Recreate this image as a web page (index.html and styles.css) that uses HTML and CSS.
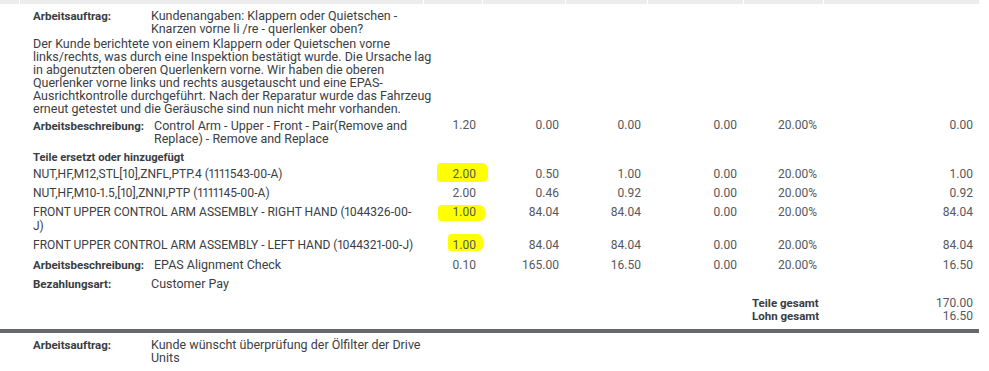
FILE: index.html
```html
<!DOCTYPE html>
<html lang="de">
<head>
<meta charset="utf-8">
<title>Arbeitsauftrag</title>
<link rel="stylesheet" href="styles.css">
</head>
<body>
<div class="page">
  <div class="row thead">
    <div class="th"></div>
    <div class="th"></div>
    <div class="th"></div>
    <div class="th"></div>
    <div class="th"></div>
    <div class="th"></div>
    <div class="th"></div>
    <div class="th"></div>
  </div>

  <section class="job">
    <div class="row">
      <div class="desc">
        <div class="field"><span class="label">Arbeitsauftrag:</span><span class="value">Kundenangaben: Klappern oder Quietschen -<br>Knarzen vorne li /re - querlenker oben?</span></div>
        <p class="note">Der Kunde berichtete von einem Klappern oder Quietschen vorne<br>links/rechts, was durch eine Inspektion bestätigt wurde. Die Ursache lag<br>in abgenutzten oberen Querlenkern vorne. Wir haben die oberen<br>Querlenker vorne links und rechts ausgetauscht und eine EPAS-<br>Ausrichtkontrolle durchgeführt. Nach der Reparatur wurde das Fahrzeug<br>erneut getestet und die Geräusche sind nun nicht mehr vorhanden.</p>
      </div>
    </div>

    <div class="row labor">
      <div class="desc"><div class="field"><span class="label">Arbeitsbeschreibung:</span><span class="value">Control Arm - Upper - Front - Pair(Remove and<br>Replace) - Remove and Replace</span></div></div>
      <div class="num">1.20</div>
      <div class="num">0.00</div>
      <div class="num">0.00</div>
      <div class="num">0.00</div>
      <div class="num">20.00%</div>
      <div class="num">0.00</div>
    </div>

    <div class="row"><div class="desc subhead">Teile ersetzt oder hinzugefügt</div></div>

    <div class="row part">
      <div class="desc part-name">NUT,HF,M12,STL[10],ZNFL,PTP.4 (1111543-00-A)</div>
      <div class="num"><span class="mark mark-a">2.00</span></div>
      <div class="num">0.50</div>
      <div class="num">1.00</div>
      <div class="num">0.00</div>
      <div class="num">20.00%</div>
      <div class="num">1.00</div>
    </div>
    <div class="row part">
      <div class="desc part-name">NUT,HF,M10-1.5,[10],ZNNI,PTP (1111145-00-A)</div>
      <div class="num">2.00</div>
      <div class="num">0.46</div>
      <div class="num">0.92</div>
      <div class="num">0.00</div>
      <div class="num">20.00%</div>
      <div class="num">0.92</div>
    </div>
    <div class="row part">
      <div class="desc part-name">FRONT UPPER CONTROL ARM ASSEMBLY - RIGHT HAND (1044326-00-<br>J)</div>
      <div class="num"><span class="mark mark-b">1.00</span></div>
      <div class="num">84.04</div>
      <div class="num">84.04</div>
      <div class="num">0.00</div>
      <div class="num">20.00%</div>
      <div class="num">84.04</div>
    </div>
    <div class="row part">
      <div class="desc part-name">FRONT UPPER CONTROL ARM ASSEMBLY - LEFT HAND (1044321-00-J)</div>
      <div class="num"><span class="mark mark-c">1.00</span></div>
      <div class="num">84.04</div>
      <div class="num">84.04</div>
      <div class="num">0.00</div>
      <div class="num">20.00%</div>
      <div class="num">84.04</div>
    </div>
    <div class="row part">
      <div class="desc"><div class="field"><span class="label">Arbeitsbeschreibung:</span><span class="value">EPAS Alignment Check</span></div></div>
      <div class="num">0.10</div>
      <div class="num">165.00</div>
      <div class="num">16.50</div>
      <div class="num">0.00</div>
      <div class="num">20.00%</div>
      <div class="num">16.50</div>
    </div>
    <div class="row part">
      <div class="desc"><div class="field"><span class="label">Bezahlungsart:</span><span class="value">Customer Pay</span></div></div>
    </div>

    <div class="totals">
      <div class="row total">
        <div class="tot-label">Teile gesamt</div>
        <div class="num">170.00</div>
      </div>
      <div class="row total">
        <div class="tot-label">Lohn gesamt</div>
        <div class="num">16.50</div>
      </div>
    </div>
  </section>

  <div class="divider"></div>

  <section class="job">
    <div class="row">
      <div class="desc">
        <div class="field"><span class="label">Arbeitsauftrag:</span><span class="value">Kunde wünscht überprüfung der Ölfilter der Drive<br>Units</span></div>
      </div>
    </div>
  </section>
</div>
</body>
</html>
```

FILE: styles.css
```css
* {
  box-sizing: border-box;
}

html,
body {
  margin: 0;
  background: #ffffff;
}

body {
  font-family: Roboto, "Liberation Sans", Arial, sans-serif;
  font-size: 12.5px;
  line-height: 13px;
  color: #3b3e43;
  overflow: hidden;
}

.page {
  width: 979px;
  position: relative;
  z-index: 0;
}

.row {
  display: grid;
  grid-template-columns: 19px 403px 58px 82px 81px 95px 79px 155px;
  column-gap: 1px;
  align-items: start;
}

/* header row, scrolled almost out of view */
.th {
  height: 4px;
  background: #ececec;
}

/* description column */
.desc {
  grid-column: 2;
  padding: 0 11px 0 13px;
}

.field {
  display: flex;
  align-items: baseline;
}

.label {
  flex: none;
  min-width: 118px;
  padding-right: 10px;
  font-weight: 700;
  font-size: 11.5px;
  color: #393c41;
}

.value {
  flex: 1;
  min-width: 0;
  white-space: nowrap;
}

.note {
  margin: 2px 0 0;
  white-space: nowrap;
}

.num {
  text-align: right;
  padding-right: 6px;
  font-size: 12px;
  color: #55585d;
  white-space: nowrap;
}

.job {
  padding-top: 5px;
}

.labor {
  margin-top: 4px;
}

.subhead {
  padding-top: 6px;
  font-weight: 700;
  font-size: 11.2px;
  color: #393c41;
}

.part {
  padding: 2.625px 0;
  line-height: 14px;
}

.part-name {
  font-size: 12px;
  font-variant-numeric: proportional-nums;
  white-space: nowrap;
}

.totals {
  padding: 3px 0 6.5px;
}

.tot-label {
  grid-column: 7;
  padding-left: 8px;
  font-weight: 700;
  font-size: 11.5px;
  white-space: nowrap;
  color: #393c41;
}

.divider {
  height: 4px;
  background: #68696c;
}

/* yellow highlighter marks */
.mark {
  position: relative;
}

.mark::before {
  content: "";
  position: absolute;
  z-index: -1;
  background: #ffff00;
  border-radius: 4px 6px 5px 3px;
}

.mark-a::before {
  left: -16px;
  right: -12px;
  top: -4px;
  bottom: -1px;
}

.mark-b::before {
  left: -15px;
  right: -9px;
  top: 0;
  bottom: -2px;
}

.mark-c::before {
  left: -5px;
  right: -7px;
  top: -4px;
  bottom: 1px;
}
```
